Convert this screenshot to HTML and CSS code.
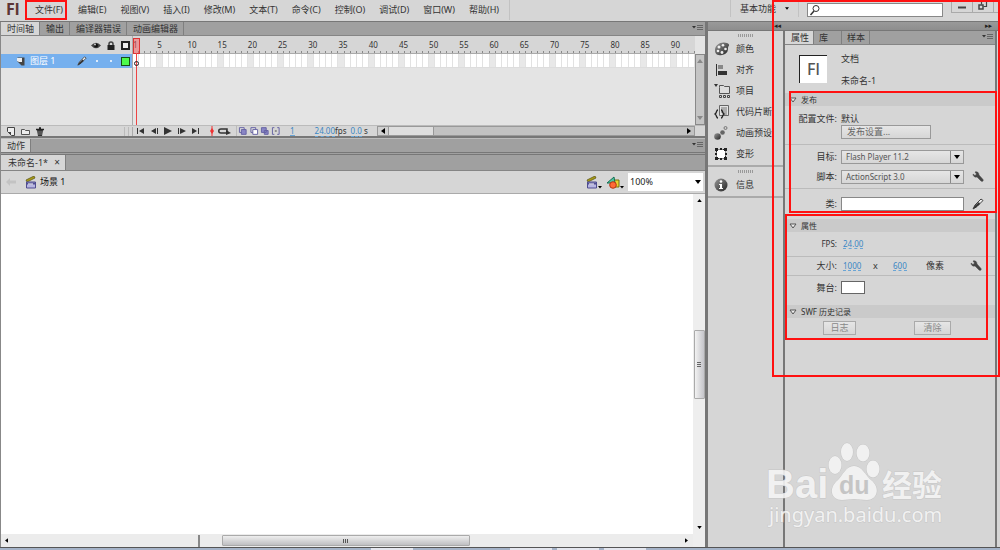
FILE: index.html
```html
<!DOCTYPE html>
<html lang="zh-CN">
<head>
<meta charset="utf-8">
<title>Flash</title>
<link rel="stylesheet" href="styles.css">
</head>
<body>
<svg class="defs" aria-hidden="true">
  <defs>
    <linearGradient id="metal" x1="0" y1="0" x2="1" y2="1"><stop offset="0" stop-color="#999"/><stop offset="1" stop-color="#222"/></linearGradient>
    <symbol id="wrench" viewBox="0 0 12 12"><path d="M1 3l2 1.500 1.500-1.500L3 1c2-.800 4 .500 4 3l4 4.500c.8 1.500-.8 2.500-2 1.500L5 6C3 6.500 1 5.500 1 3z" fill="#444" stroke="#444" stroke-width=".5"/></symbol>
    <symbol id="pencil" viewBox="0 0 12 12"><path d="M1 11l2-4 6-6 2 1.500-6 6z" fill="#eee" stroke="#444"/><path d="M1 11l1.500-3L7 4l1 2-4 3.500z" fill="#333"/></symbol>
    <symbol id="clap" viewBox="0 0 12 13"><path d="M1 4l8-4 1 2-8 4z" fill="#a89b16" stroke="#554f12" stroke-width=".7"/><path d="M1.500 6h9v6h-9z" fill="#b7b6e2" stroke="#4f4d91"/><path d="M1.500 6.500h9v2h-9z" fill="#504e90"/><path d="M3 8h5" stroke="#fff"/></symbol>
    <symbol id="menu" viewBox="0 0 12 8"><path d="M0 2h4L2 4.500z" fill="#333"/><path d="M5 1.500h6M5 3.500h6M5 5.500h6" stroke="#666"/></symbol>
    <symbol id="fold" viewBox="0 0 8 6"><path d="M1 1h6L4 5z" fill="#eee" stroke="#555"/></symbol>
    <symbol id="down" viewBox="0 0 6 4"><path d="M0 0h6L3 4z"/></symbol>
    <symbol id="left" viewBox="0 0 4 6"><path d="M4 0v6L0 3z"/></symbol>
    <symbol id="right" viewBox="0 0 4 6"><path d="M0 0v6l4-3z"/></symbol>
    <symbol id="up" viewBox="0 0 6 4"><path d="M0 4h6L3 0z"/></symbol>
  </defs>
</svg>

<header class="menubar">
  <span class="brand">Fl</span>
  <nav class="menus">
    <button class="marked">文件(F)</button><button>编辑(E)</button><button>视图(V)</button><button>插入(I)</button><button>修改(M)</button><button>文本(T)</button><button>命令(C)</button><button>控制(O)</button><button>调试(D)</button><button>窗口(W)</button><button>帮助(H)</button>
  </nav>
  <button class="layout">基本功能<svg width="4" height="3"><use href="#down"/></svg></button>
  <label class="search"><svg width="12" height="12" viewBox="0 0 12 12" fill="none" stroke="#333"><circle cx="7" cy="4.500" r="3"/><path d="M5 7L1.500 11" stroke-width="1.500"/></svg><input type="text" aria-label="搜索"></label>
  <div class="winbtns">
    <button aria-label="最小化"><svg width="10" height="10"><path d="M1 6.500h8" stroke="#444" stroke-width="2"/></svg></button>
    <button aria-label="还原"><svg width="10" height="10" fill="none" stroke="#444"><path d="M3.500 3.500v-3h5v5h-3" stroke-width="1.200"/><path d="M1 4h4v4H1z" stroke-width="1.500"/></svg></button>
    <button aria-label="关闭"></button>
  </div>
</header>

<div class="workspace">
  <main class="editor">
    <section class="timeline">
      <div class="tabs"><button class="on">时间轴</button><button>输出</button><button>编译器错误</button><button>动画编辑器</button><svg class="panelmenu" width="12" height="8"><use href="#menu"/></svg></div>
      <div class="tlbody">
        <div class="layers">
          <div class="layerhead">
            <svg width="10" height="9" viewBox="0 0 10 9"><path d="M0 4.500Q5-1 10 4.500 5 10 0 4.500z" fill="#444"/><circle cx="5" cy="4.500" r="2" fill="#111"/><circle cx="4" cy="3.500" r="1" fill="#ccc"/></svg>
            <svg width="8" height="9" viewBox="0 0 8 9"><path d="M2 5V3a2 2 0 014 0v2" fill="none" stroke="#444" stroke-width="1.500"/><rect x=".5" y="4" width="7" height="5" fill="#222"/></svg>
            <i class="outline"></i>
          </div>
          <div class="layer">
            <svg width="8" height="9" viewBox="0 0 8 9"><path d="M.5.5h7v8h-3l-4-4z" fill="#444"/><path d="M0 1h5v4H2L0 4z" fill="#eee"/></svg>
            <span class="layername">图层 1</span>
            <svg width="10" height="10"><use href="#pencil"/></svg>
            <i class="dot"></i><i class="dot"></i><i class="outline green"></i>
          </div>
        </div>
        <div class="frames">
          <div class="ruler" id="ruler"></div>
          <div class="cells" id="cells"></div>
          <div class="playhead"></div><i class="key"></i>
        </div>
        <div class="tlv"><svg width="6" height="4"><use href="#up"/></svg><svg width="6" height="4"><use href="#down"/></svg></div>
      </div>
      <div class="tlfoot">
        <div class="layertools">
          <svg width="8" height="9" viewBox="0 0 8 9"><path d="M.5.5h7v8h-3l-4-4z" fill="#eee" stroke="#444"/><path d="M1 5h3v3z" fill="#444"/></svg>
          <svg width="9" height="9" viewBox="0 0 9 9"><path d="M.5 2.500h3l1 1h4v4h-8z" fill="#eee" stroke="#555"/></svg>
          <svg width="8" height="9" viewBox="0 0 8 9"><path d="M0 2.500h8M3 1h2" stroke="#222" stroke-width="1.500"/><path d="M1 3h6L6 9H2z" fill="#333"/><path d="M3 4v4M5 4v4" stroke="#999" stroke-width=".7"/></svg>
          <i class="grip2"></i>
        </div>
        <svg class="play" width="64" height="8" fill="#333"><path d="M1 1h1v6H1zM8 1v6L3 4zM20 1v6l-5-3zM21 1h1v6h-1zM28 0l8 4-8 4zM42 1h1v6h-1zM44 1l6 3-6 3zM56 1l5 3-5 3zM62 1h1v6h-1z"/></svg>
        <svg class="loop" width="24" height="10" viewBox="0 0 24 10"><path d="M3 0v10" stroke="#e33"/><path d="M3 2l2 3-2 3-2-3z" fill="#e33"/><path d="M18 7h-6c-3 0-3-4 0-4h6v3" fill="none" stroke="#333" stroke-width="1.500"/><path d="M17 4l5 3-5 2z" fill="#333"/></svg>
        <svg class="onion" width="46" height="10" viewBox="0 0 46 10"><g stroke="#6562a3"><path d="M1.500 1.500h5v5h-5zM13.500 1.500h5v5h-5z" fill="#ddd"/><path d="M3.500 3.500h5v5h-5zM24.500 1.500h5v5h-5zM27.500 4.500h4v4h-4z" fill="#8986c5"/><path d="M15.500 3.500h5v5h-5z" fill="#fff"/><path d="M38 1.500h-2v7h2M41 1.500h2v7h-2" fill="none"/></g><path d="M38.500 4.500h2v1h-2z" fill="#444"/></svg>
        <a class="num frame" href="#">1</a>
        <span class="rate"><a class="num" href="#">24.00</a>fps</span>
        <span class="time"><a class="num" href="#">0.0</a> s</span>
        <div class="tlh"><span><svg width="4" height="6"><use href="#left"/></svg></span><i></i><svg class="end" width="4" height="6"><use href="#right"/></svg></div>
        <div class="corner"></div>
      </div>
    </section>
    <div class="tabs actions"><button class="on">动作</button><svg class="panelmenu" width="12" height="8"><use href="#menu"/></svg></div>
    <section class="document">
      <div class="tabs doctabs"><button class="on">未命名-1* <span class="x">×</span></button></div>
      <div class="editbar">
        <svg width="10" height="8" viewBox="0 0 10 8"><path d="M0 4l4-4v2.500h6v3H4V8z" fill="#c3c3c3"/></svg>
        <svg class="scene" width="12" height="13"><use href="#clap"/></svg>
        <span class="scenename">场景 1</span>
        <svg width="16" height="13" viewBox="0 0 16 13"><use href="#clap" width="12" height="13"/><path d="M12 10h4l-2 2.500z"/></svg>
        <svg width="17" height="13" viewBox="0 0 17 13"><path d="M6 4h6v7H6z" fill="#e7d32e" stroke="#77700e"/><path d="M0 7l7-6 1 6z" fill="#4cc5a0" stroke="#176d52"/><circle cx="6" cy="9" r="3.300" fill="#ff6a36" stroke="#b53512"/><path d="M13 10h4l-2 2.500z"/></svg>
        <span class="zoom"><select aria-label="缩放"><option>100%</option></select><svg width="6" height="4"><use href="#down"/></svg></span>
      </div>
      <div class="stagearea">
        <div class="stage"></div>
        <div class="vbar"><svg width="5" height="3"><use href="#up"/></svg><i></i><svg width="5" height="3"><use href="#down"/></svg></div>
        <div class="hbar"><svg width="3" height="5"><use href="#left"/></svg><b></b><i></i><svg class="end" width="3" height="5"><use href="#right"/></svg></div>
        <div class="nook"></div>
      </div>
    </section>
  </main>

  <aside class="side">
    <div class="sidehead"><span class="dockfold">◂◂</span><span class="propfold">▸▸</span></div>
    <div class="sidebody">
      <nav class="dock">
        <div class="group">
          <i class="grip"></i>
          <button><svg width="16" height="14" viewBox="0 0 16 14"><path d="M1 8C1 3 7-1 13 1c4 2 1 3 1 5s0 6-6 7-7-2-7-5z" fill="url(#metal)"/><g fill="#eee"><circle cx="5" cy="5" r="1.500"/><circle cx="9" cy="3.300" r="1.300"/><circle cx="4" cy="9" r="1.300"/><circle cx="8" cy="10.500" r="1.400"/><circle cx="11.500" cy="7" r="1.300"/></g></svg>颜色</button>
          <button><svg width="14" height="12" viewBox="0 0 14 12"><path d="M2.500 0v12" stroke="#333"/><path d="M4 1h5v4H4z" fill="#888"/><path d="M4 7h9v4H4z" fill="#333"/></svg>对齐</button>
          <button><svg width="16" height="14" viewBox="0 0 16 14"><path d="M0 0h4L2 3z" fill="#333"/><path d="M5.500 3.500V1.500h4l1 1h5v7h-10z" fill="#ddd" stroke="#555"/><path d="M5.500 11.500h2v2h-2zM9.500 11.500h2v2h-2zM13.500 11.500h2v2h-2z" fill="#ddd" stroke="#444"/></svg>项目</button>
          <button><svg width="16" height="14" viewBox="0 0 16 14"><path d="M5.500.5h9v10h-9z" fill="#e4e4e4" stroke="#666"/><path d="M7 3h6M7 5h6M7 7h6M10 9h3" stroke="#777"/><path d="M4 5C2 5 3 8 1 9c2 1 1 4 3 4M7 5c2 0 1 3 3 4-2 1-1 4-3 4" fill="none" stroke="#222" stroke-width="1.300"/></svg>代码片断</button>
          <button><svg width="14" height="14" viewBox="0 0 14 14"><circle cx="3.500" cy="10.500" r="3.300" fill="url(#metal)"/><circle cx="8.500" cy="6.500" r="2.300" fill="#666"/><circle cx="11.500" cy="2" r="1.500" fill="#ccc" stroke="#777"/></svg>动画预设</button>
          <button><svg width="14" height="14" viewBox="0 0 14 14"><path d="M2.500 2.500h9v9h-9z" fill="#fff" stroke="#222" stroke-dasharray="2 1"/><path d="M1 1h3v3H1zM10 1h3v3h-3zM1 10h3v3H1zM10 10h3v3h-3zM6 1h2v2H6zM6 11h2v2H6zM1 6h2v2H1zM11 6h2v2h-2z" fill="#222"/></svg>变形</button>
        </div>
        <div class="group">
          <i class="grip"></i>
          <button><svg width="14" height="14" viewBox="0 0 14 14"><circle cx="7" cy="7" r="6.500" fill="url(#metal)"/><circle cx="7" cy="3.500" r="1.300" fill="#fff"/><path d="M5 6h3v4h1v1H5v-1h1V7H5z" fill="#fff"/></svg>信息</button>
        </div>
      </nav>

      <section class="props">
        <div class="tabs"><button class="on">属性</button><button>库</button><button>样本</button><svg class="panelmenu" width="12" height="8"><use href="#menu"/></svg></div>
        <div class="docinfo"><span class="docicon">Fl</span><div><p>文档</p><p>未命名-1</p></div></div>
        <h2><svg width="8" height="6"><use href="#fold"/></svg>发布</h2>
        <div class="publish">
          <div class="row profile"><span class="lab">配置文件:</span><span>默认</span></div>
          <div class="row pubset"><span class="lab"></span><button class="btn wide">发布设置...</button></div>
          <div class="row target"><label class="lab" for="target">目标:</label><span class="pick"><select id="target"><option>Flash Player 11.2</option></select><svg width="6" height="4"><use href="#down"/></svg></span></div>
          <div class="row script"><label class="lab" for="script">脚本:</label><span class="pick"><select id="script"><option>ActionScript 3.0</option></select><svg width="6" height="4"><use href="#down"/></svg></span><svg width="12" height="12"><use href="#wrench"/></svg></div>
          <div class="row cls"><label class="lab" for="cls">类:</label><input id="cls" type="text"><svg width="12" height="12"><use href="#pencil"/></svg></div>
        </div>
        <h2><svg width="8" height="6"><use href="#fold"/></svg>属性</h2>
        <div class="row fps"><span class="lab">FPS:</span><a class="num" href="#">24.00</a></div>
        <div class="row size"><span class="lab">大小:</span><span class="dims"><a class="num" href="#">1000</a><span>x</span><a class="num" href="#">600</a><span class="unit">像素</span></span><svg width="12" height="12"><use href="#wrench"/></svg></div>
        <div class="row bgcol"><span class="lab">舞台:</span><button class="swatch" aria-label="舞台颜色"></button></div>
        <h2><svg width="8" height="6"><use href="#fold"/></svg>SWF 历史记录</h2>
        <div class="history"><button class="btn" disabled>日志</button><button class="btn" disabled>清除</button></div>
      </section>
      <div class="edge"></div>
    </div>
  </aside>
</div>
<footer class="taskbar"><i></i><i></i><i></i><i></i></footer>

<div class="mark mark-all"></div>
<div class="mark mark-publish"></div>
<div class="mark mark-props"></div>
<svg class="watermark" width="184" height="92" viewBox="0 0 184 92">
  <g fill="#f4f4f4" stroke="#c6c6c6" stroke-width="1" paint-order="stroke">
    <text class="wm-latin" x="0" y="56">Bai</text>
    <ellipse cx="69" cy="23" rx="6.500" ry="9"/><ellipse cx="81" cy="10" rx="6" ry="9"/><ellipse cx="97" cy="11" rx="6.500" ry="8.500"/><ellipse cx="107" cy="27" rx="6.500" ry="8.500"/>
    <path d="M88 24c8 0 11 9 17 14 10 8 6 20-4 20-5 0-8-1-13-1s-8 1-12 1c-11 0-14-12-4-20 5-5 8-14 16-14z"/>
    <text class="wm-cjk" x="116" y="54">经验</text>
    <text class="wm-url" x="3" y="80">jingyan.baidu.com</text>
  </g>
  <text class="wm-du" x="73" y="52">du</text>
</svg>
<script src="frames.js"></script>
</body>
</html>
```
FILE: styles.css
```css
* { box-sizing: border-box; }
body { margin: 0; height: 100vh; display: flex; flex-direction: column; overflow: hidden; position: relative; background: #d6d6d6; color: #333; font: 9px/12px "Noto Sans", "Noto Sans CJK SC", sans-serif; }
button, input, select { font: inherit; color: inherit; margin: 0; padding: 0; border: 0; background: none; border-radius: 0; }
button { white-space: nowrap; }
svg { flex: none; display: block; }
i, b { display: block; flex: none; }
p, h2 { margin: 0; font: inherit; }
.defs { position: absolute; width: 0; height: 0; }

.menubar { display: flex; height: 21px; flex: none; align-items: flex-start; }
.brand { width: 25px; padding-left: 6px; font: bold 16px/18px "Noto Sans", sans-serif; color: #5d3535; }
.menus { display: flex; flex: 1; height: 20px; }
.menus button { padding: 0 7px; height: 20px; }
.menus .marked { border: 2px solid #f11; padding: 0 0 0 8px; width: 42px; margin-right: 4px; text-align: left; }
.menus button:last-child { border-right: 1px solid #c2c2c2; padding-right: 10px; }
.layout { display: flex; align-items: center; gap: 9px; height: 17px; padding: 0 9px; border: solid #c2c2c2; border-width: 0 1px; }
.search { display: flex; align-items: center; width: 136px; height: 14px; margin: 3px 8px 0; padding-left: 1px; border: 1px solid #888; background: #fff; }
.search input { flex: 1; min-width: 0; height: 12px; outline: 0; }
.winbtns { display: flex; width: 49px; height: 13px; overflow: hidden; }
.winbtns button { flex: none; width: 21px; display: grid; place-items: center; border: solid #aaa; border-width: 0 0 1px 1px; }

.workspace { flex: 1; min-height: 0; display: flex; border-top: 1px solid #777; }
.editor { flex: 1; min-width: 0; display: flex; flex-direction: column; border-left: 1px solid #888; }
.tabs { display: flex; height: 14px; flex: none; background: #a0a0a0; border-bottom: 1px solid #858585; }
.tabs button { padding: 0 5px 0 6px; border-right: 1px solid #7f7f7f; }
.tabs .on { background: #d6d6d6; }
.panelmenu { margin: 2px 1px 0 auto; }

.timeline { height: 116px; flex: none; display: flex; flex-direction: column; border-bottom: 2px solid #777; }
.tlbody { flex: 1; display: flex; background: #e4e4e4; }
.layers { width: 132px; border-right: 1px solid #aaa; flex: none; }
.layerhead { height: 18px; display: flex; justify-content: flex-end; align-items: center; gap: 6px; padding-right: 2px; background: #d6d6d6; }
.outline { width: 9px; height: 9px; border: 2px solid #222; background: #eee; }
.layer { height: 14px; display: flex; align-items: center; padding: 0 2px 0 16px; background: #76b0ee; color: #fff; }
.layername { margin: 0 auto 0 5px; }
.dot { width: 2px; height: 2px; margin-left: 9px; background: #fff; border-radius: 1px; }
.dot + .dot { margin: 0 9px 0 12px; }
.green { border: 1px solid #174d17; background: #4cfa4c; }
.frames { flex: 1; position: relative; }
.ruler, .cells { display: grid; grid-template-columns: repeat(93, minmax(0, 1fr)); }
.ruler { height: 18px; background: #d6d6d6; border-bottom: 1px solid #aaa; }
.ruler span { height: 17px; font-size: 8px; line-height: 18px; background: linear-gradient(#888, #888) right bottom / 1px 2px no-repeat; white-space: nowrap; }
.cells { height: 14px; border-bottom: 1px solid #ddd; }
.cells span { background: #fff; border-right: 1px solid #e2e2e2; }
.cells .fifth { background: #e8e8e8; }
.playhead { position: absolute; left: 0; top: 2px; width: 7px; height: 16px; border: 1px solid #d33; background: rgba(255, 90, 90, .5); }
.playhead::after { content: ""; position: absolute; left: 2px; top: 14px; width: 1px; height: 72px; background: #e44; }
.key { position: absolute; left: 1px; top: 25px; width: 5px; height: 5px; border: 1px solid #222; border-radius: 3px; }
.tlv { width: 10px; margin-top: 18px; display: flex; flex-direction: column; justify-content: space-between; align-items: center; padding: 4px 0; border: 1px solid #888; background: #c4c4c4; fill: #888; }
.tlfoot { height: 11px; display: flex; align-items: center; border-top: 1px solid #bbb; background: #d6d6d6; font-size: 8px; line-height: 10px; white-space: nowrap; }
.layertools { width: 132px; display: flex; gap: 6px; padding-left: 6px; border-right: 1px solid #aaa; }
.grip2 { width: 5px; height: 9px; margin-left: auto; margin-right: 3px; border: solid #bbb; border-width: 0 1px; }
.play { margin-left: 3px; }
.loop { margin-left: 9px; }
.onion { margin-left: 3px; padding-left: 1px; border-left: 1px solid #bbb; }
.num { color: #3a86c4; text-decoration: none; border-bottom: 1px dashed #6aa5d5; line-height: 9px; }
.frame { margin-left: 8px; }
.rate { margin-left: 20px; width: 36px; }
.time { width: 26px; }
.tlh { flex: 1; align-self: stretch; display: flex; align-items: center; background: #c2c2c2; border: 1px solid #999; }
.tlh span { width: 11px; display: grid; place-items: center; align-self: stretch; border-right: 1px solid #999; background: #d0d0d0; }
.tlh i { width: 45px; align-self: stretch; background: #dedede; border-right: 1px solid #999; }
.end { margin-left: auto; margin-right: 3px; }
.corner { width: 10px; }
.actions { height: 17px; border-top: 1px solid #bbb; border-bottom: 3px double #777; }

.document { flex: 1; min-height: 0; display: flex; flex-direction: column; }
.doctabs { height: 16px; }
.doctabs button { padding: 0 5px 0 7px; }
.x { margin-left: 4px; font-size: 10px; }
.editbar { height: 23px; flex: none; display: flex; align-items: center; padding: 0 2px 0 5px; border-bottom: 1px solid #aaa; }
.scene { margin-left: 9px; }
.scenename { margin: 0 auto 0 3px; color: #111; }
.editbar .scenename + svg { margin-right: 5px; }
.zoom { position: relative; display: block; width: 75px; height: 18px; margin-left: 4px; background: #fff; }
.zoom select { width: 100%; height: 18px; padding-left: 2px; appearance: none; outline: 0; color: #222; }
.zoom svg { position: absolute; right: 2px; top: 7px; pointer-events: none; }
.stagearea { flex: 1; min-height: 0; display: grid; grid-template: minmax(0, 1fr) 13px / 1fr 12px; }
.stage { background: #fff; }
.vbar { display: flex; flex-direction: column; align-items: center; background: #eee; padding: 5px 0; }
.vbar i { width: 11px; height: 69px; margin: 128px 0 auto; border: 1px solid #aaa; border-radius: 1px; background: linear-gradient(#666, #666) center 31px / 4px 1px no-repeat, linear-gradient(#666, #666) center 33px / 4px 1px no-repeat, linear-gradient(#666, #666) center 35px / 4px 1px no-repeat, linear-gradient(90deg, #f2f2f2, #c5c5ca); }
.hbar { display: flex; align-items: center; background: #ececec; padding-left: 4px; }
.hbar b { width: 192px; height: 12px; border-right: 2px solid #888; }
.hbar i { width: 36%; height: 11px; margin-left: 22px; border: 1px solid #aaa; border-radius: 1px; background: repeating-linear-gradient(90deg, #555 0 1px, transparent 1px 2px) center / 6px 4px no-repeat, linear-gradient(#eee, #bfbfc2); }
.hbar .end { margin-right: 5px; }
.nook { background: #eee; }

.side { width: 295px; flex: none; display: flex; flex-direction: column; border-left: 3px solid #777; }
.sidehead { height: 9px; flex: none; display: flex; justify-content: space-between; padding: 0 8px 0 66px; background: linear-gradient(#999, #8d8d8d); border-bottom: 1px solid #777; font: 7px/8px "DejaVu Sans", sans-serif; color: #222; }
.sidebody { flex: 1; display: flex; min-height: 0; }
.dock { width: 75px; flex: none; }
.group { padding: 3px 0 1px; border-bottom: 2px solid #aaa; }
.grip { width: 15px; height: 3px; margin: 0 auto 1px; background: repeating-linear-gradient(90deg, #999 0 1px, transparent 1px 2px); }
.group button { display: grid; grid-template-columns: 16px 1fr; align-items: center; justify-items: start; column-gap: 6px; width: 100%; height: 21px; padding-left: 6px; text-align: left; }
.props { flex: 1; min-width: 0; border-left: 2px solid #777; }
.props .tabs button { width: 28px; padding: 0 0 0 5px; text-align: left; }
.props .tabs .on { padding-left: 6px; width: 29px; }
.docinfo { display: flex; gap: 14px; height: 48px; padding: 8px 14px; }
.docinfo p { height: 22px; }
.docicon { width: 28px; height: 28px; margin-top: 2px; border: solid #222; border-width: 1px 0 0 1px; background: #fff; text-align: center; font: 500 16px/26px "Noto Sans", sans-serif; color: #555; }
.props h2 { display: flex; align-items: center; gap: 4px; height: 13px; padding-left: 4px; background: #cacaca; font-size: 8px; }
.row { display: grid; grid-template-columns: 52px 123px 12px; column-gap: 4px; align-items: center; }
.lab { text-align: right; white-space: nowrap; }
.row > svg { margin-left: 4px; }
.publish { height: 113px; overflow: hidden; }
.profile { height: 12px; margin-top: 7px; }
.pubset { height: 14px; }
.btn { height: 14px; border: 1px solid #999; background: linear-gradient(#e6e6e6, #d6d6d6); color: #666; line-height: 12px; }
.wide { width: 90px; padding-left: 5px; text-align: left; }
.target { height: 22px; margin-top: 5px; border-top: 1px solid #bbb; padding-top: 2px; }
.script { height: 22px; }
.cls { height: 26px; border-top: 1px solid #bbb; padding-top: 4px; }
.pick { position: relative; display: block; height: 14px; }
.pick select { display: block; width: 100%; height: 14px; padding-left: 4px; appearance: none; border: 1px solid #999; background: linear-gradient(90deg, transparent 108px, #888 108px 109px, transparent 109px), linear-gradient(#e6e6e6, #d6d6d6); font-size: 8px; color: #555; }
.pick svg { position: absolute; right: 4px; top: 5px; pointer-events: none; }
.cls input { height: 14px; border: 1px solid #888; background: #fff; }
.fps { height: 25px; border-bottom: 1px solid #bbb; }
.fps .num, .fps .lab, .dims .num { font-size: 8px; }
.row .num { justify-self: start; margin-left: 2px; }
.size { height: 19px; border-bottom: 1px solid #bbb; }
.dims { display: grid; grid-template-columns: 32px 18px 35px auto; align-items: center; }
.size > svg { margin-left: 2px; }
.bgcol { height: 23px; margin-bottom: 6px; }
.swatch { width: 24px; height: 13px; border: 1px solid #666; background: #fff; }
.history { display: flex; gap: 58px; padding: 3px 0 0 38px; }
.history .btn { width: 33px; border-color: #aaa; color: #888; }
.history .btn + .btn { width: 37px; }
.edge { width: 5px; border-left: 2px solid #777; flex: none; }

.taskbar { height: 3px; flex: none; display: flex; gap: 5px; justify-content: flex-end; padding-right: 354px; border-top: 1px solid #555; background: #a5b3c8; }
.taskbar i { width: 42px; background: #e4e6ee; }
.taskbar i:first-child { margin-right: 92px; }

.mark { position: absolute; border: 2px solid #f11; pointer-events: none; }
.mark-all { right: 0; top: 0; width: 228px; height: 377px; }
.mark-publish { right: 3px; top: 91px; width: 208px; height: 122px; }
.mark-props { right: 12px; top: 214px; width: 203px; height: 126px; }
.watermark { position: absolute; right: 50px; bottom: 16px; opacity: .9; pointer-events: none; overflow: visible; }
.wm-latin { font: bold 40px "Liberation Sans", sans-serif; }
.wm-cjk { font: bold 30px "Noto Sans CJK SC", sans-serif; }
.wm-url { font: 20px "Noto Sans", sans-serif; }
.wm-du { font: bold 25px "Liberation Sans", sans-serif; fill: #c4c4c4; }
```
FILE: frames.js
```js
const ruler = document.getElementById("ruler");
const cells = document.getElementById("cells");
for (let n = 1; n <= 93; n++) {
  const tick = document.createElement("span");
  if (n === 1 || n % 5 === 0) tick.textContent = n;
  ruler.append(tick);
  const cell = document.createElement("span");
  if (n % 5 === 0) cell.className = "fifth";
  cells.append(cell);
}
```
